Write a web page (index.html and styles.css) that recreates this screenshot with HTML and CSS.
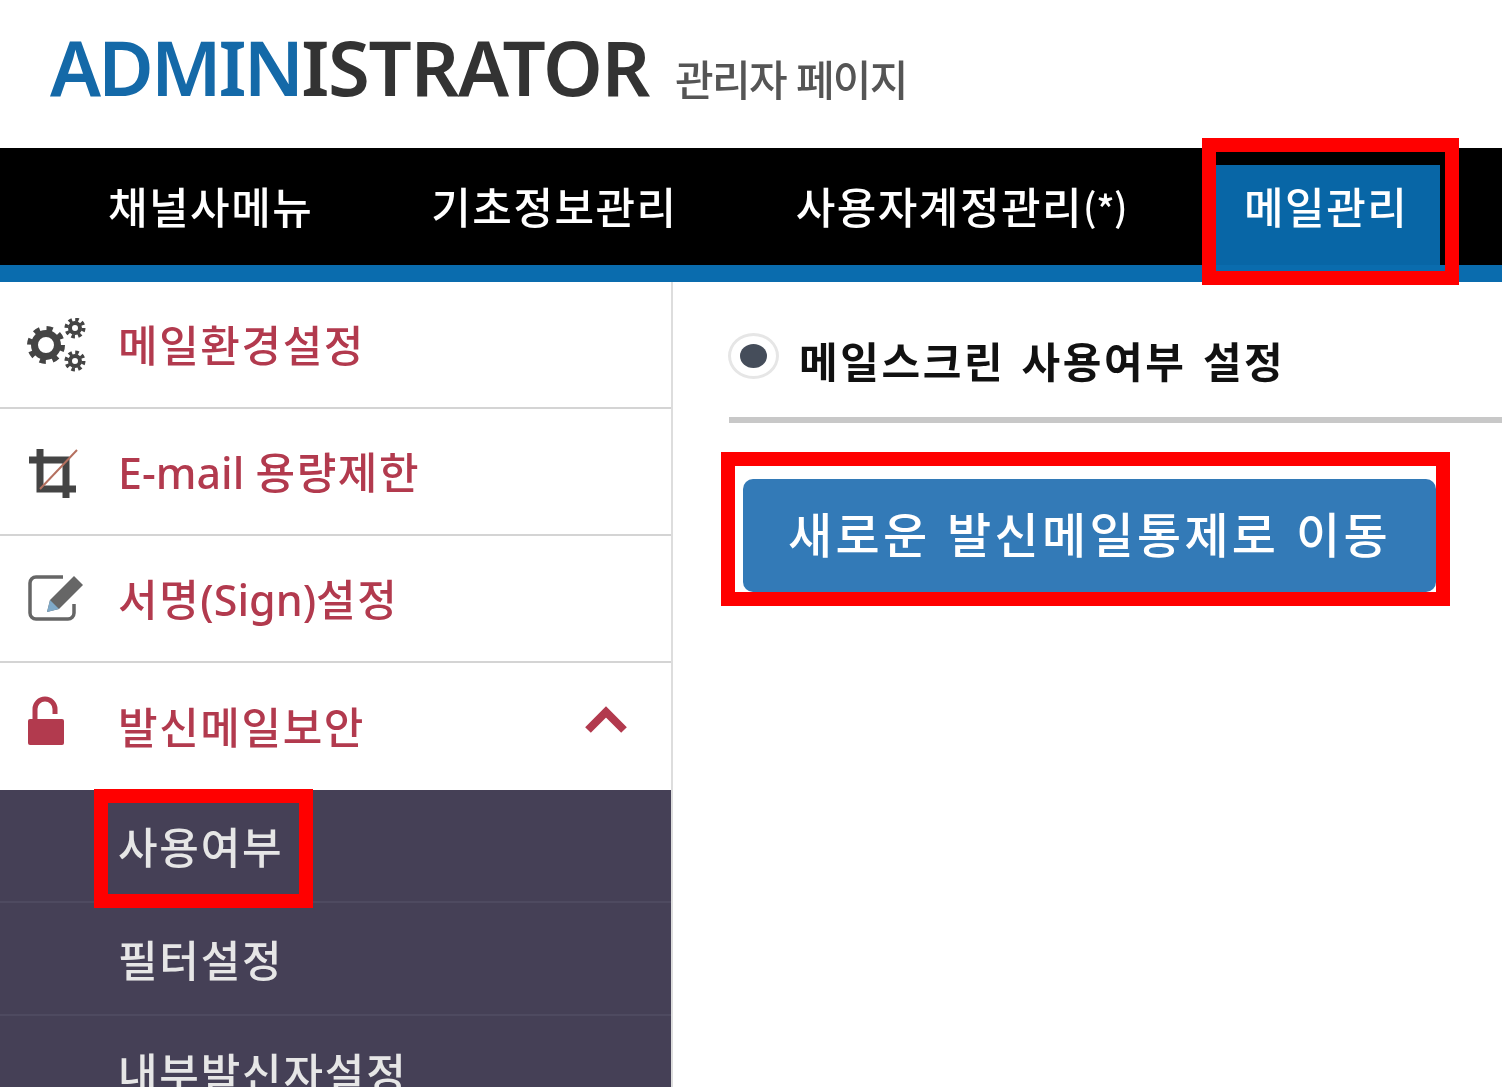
FILE: index.html
```html
<!DOCTYPE html>
<html lang="ko">
<head>
  <meta charset="UTF-8" />
  <title>ADMINISTRATOR</title>
  <link rel="stylesheet" href="styles.css">
</head>
<body>
  <header class="top">
    <span class="logo"><span class="logo-blue">ADMIN</span>ISTRATOR</span>
    <span class="logo-sub">관리자 페이지</span>
  </header>

  <nav class="gnb">
    <a class="gnb-item">채널사메뉴</a>
    <a class="gnb-item">기초정보관리</a>
    <a class="gnb-item">사용자계정관리<span class="gnb-star">(*)</span></a>
    <a class="gnb-item active">메일관리</a>
  </nav>

  <div class="wrap">
    <aside class="side">
      <div class="side-row">
        <span class="side-icon">
          <svg width="60" height="54" viewBox="0 0 60 54">
            <circle cx="19" cy="27" r="11.500" fill="none" stroke="#444" stroke-width="7"/>
            <circle cx="19" cy="27" r="16" fill="none" stroke="#444" stroke-width="6" stroke-dasharray="6 6.57"/>
            <circle cx="48" cy="10" r="5" fill="none" stroke="#444" stroke-width="4"/>
            <circle cx="48" cy="10" r="8.500" fill="none" stroke="#444" stroke-width="4" stroke-dasharray="3.500 3.170"/>
            <circle cx="48" cy="43" r="5" fill="none" stroke="#444" stroke-width="4"/>
            <circle cx="48" cy="43" r="8.500" fill="none" stroke="#444" stroke-width="4" stroke-dasharray="3.500 3.170"/>
          </svg>
        </span>
        <span class="side-text">메일환경설정</span>
      </div>
      <div class="side-row">
        <span class="side-icon icon-low">
          <svg width="60" height="54" viewBox="0 0 60 54">
            <path d="M13 2v40h36M2 13h37v38" fill="none" stroke="#444" stroke-width="7"/>
            <path d="M13 42L50 3" fill="none" stroke="#b5705f" stroke-width="2"/>
          </svg>
        </span>
        <span class="side-text"><span class="latin">E-mail </span>용량제한</span>
      </div>
      <div class="side-row">
        <span class="side-icon">
          <svg width="60" height="54" viewBox="0 0 60 54">
            <path d="M36 5H9a6 6 0 0 0-6 6v30a6 6 0 0 0 6 6h32a6 6 0 0 0 6-6v-9" fill="none" stroke="#666" stroke-width="3.500"/>
            <path d="M47 4l9 9-24 24-12 3 3-12z" fill="#666"/>
            <path d="M23 28l9 9-12 3z" fill="#7fa9c8"/>
          </svg>
        </span>
        <span class="side-text">서명<span class="latin">(Sign)</span>설정</span>
      </div>
      <div class="side-row open">
        <span class="side-icon icon-high">
          <svg width="60" height="54" viewBox="0 0 60 54">
            <path d="M8 28V13a10 10 0 0 1 20 0v5" fill="none" stroke="#b23a4e" stroke-width="5"/>
            <rect x="1" y="23" width="36" height="26" rx="2" fill="#b23a4e"/>
          </svg>
        </span>
        <span class="side-text">발신메일보안</span>
        <svg class="side-arrow" width="46" height="32" viewBox="0 0 46 32">
          <path d="M5 26L23 8l18 18" fill="none" stroke="#b23a4e" stroke-width="8"/>
        </svg>
      </div>
      <ul class="sub">
        <li>사용여부</li>
        <li>필터설정</li>
        <li>내부발신자설정</li>
      </ul>
    </aside>

    <main class="content">
      <div class="title-row">
        <span class="radio"><span class="radio-dot"></span></span>
        <h2 class="title">메일스크린 사용여부 설정</h2>
      </div>
      <button class="move-btn">새로운 발신메일통제로 이동</button>
    </main>
  </div>

  <!-- red annotation boxes -->
  <div class="mark mark-tab"></div>
  <div class="mark mark-btn"></div>
  <div class="mark mark-sub"></div>
</body>
</html>
```

FILE: styles.css
```css
* {
  box-sizing: border-box;
}
html, body {
  height: 1087px;
}
body {
  margin: 0;
  overflow: hidden;
  position: relative;
  background: #fff;
  font-family: "Noto Sans", "Noto Sans CJK KR", sans-serif;
}
.top, .gnb, .wrap {
  filter: blur(0.6px);
}
.top {
  height: 148px;
  padding: 17px 0 0 50px;
  display: flex;
  align-items: baseline;
  gap: 26px;
  white-space: nowrap;
}
.logo {
  font-size: 76px;
  line-height: 100px;
  letter-spacing: -1.3px;
  font-weight: 600;
  color: #333;
}
.logo-blue {
  color: #1469a8;
  letter-spacing: -2.9px;
}
.logo-sub {
  font-family: "Noto Sans CJK KR", sans-serif;
  font-size: 42px;
  letter-spacing: -1.7px;
  font-weight: 500;
  color: #555;
}
.gnb {
  height: 134px;
  background: #000;
  border-bottom: 17px solid #0a6cae;
  padding: 17px 0 0 78px;
  display: flex;
  gap: 58px;
  white-space: nowrap;
}
.gnb-item {
  height: 100px;
  padding: 15px 30px 0;
  font-family: "Noto Sans CJK KR", sans-serif;
  font-size: 43px;
  font-weight: 500;
  letter-spacing: 1.5px;
  line-height: 50px;
  color: #fff;
}
.gnb-star {
  font-size: 38px;
  letter-spacing: -0.5px;
}
.gnb-item.active {
  background: #0866a6;
  width: 224px;
  margin-left: 1px;
  padding-left: 28px;
}
.wrap {
  display: flex;
  height: 805px;
}
.side {
  width: 673px;
  border-right: 2px solid #ddd;
  flex-shrink: 0;
}
.side-row {
  height: 127px;
  border-bottom: 2px solid #d4d4d4;
  padding-left: 27px;
  display: flex;
  align-items: center;
  font-family: "Noto Sans", "Noto Sans CJK KR", sans-serif;
  font-size: 43px;
  font-weight: 500;
  letter-spacing: 1.6px;
  color: #b23a4e;
}
.side-row.open {
  border-bottom: 0;
}
.side-icon {
  width: 91px;
  display: flex;
  flex-shrink: 0;
}
.icon-low {
  padding-top: 5px;
}
.icon-high {
  padding-bottom: 8px;
}
.side-arrow {
  margin-left: auto;
  margin-right: 42px;
  margin-top: -14px;
}
.side-text {
  white-space: nowrap;
  padding-bottom: 2px;
}
.latin {
  letter-spacing: 0;
}
.sub {
  list-style: none;
  margin: 0;
  padding: 0;
  background: #454056;
  height: 297px;
  color: #e6e6e6;
  font-family: "Noto Sans CJK KR", sans-serif;
  font-size: 43px;
  font-weight: 500;
  letter-spacing: 1.8px;
}
.sub li {
  height: 113px;
  padding-left: 118px;
  border-bottom: 2px solid #4e4a60;
  line-height: 111px;
  white-space: nowrap;
}
.content {
  flex: 1;
  padding: 48px 0 0 56px;
}
.title-row {
  height: 93px;
  border-bottom: 6px solid #c8c8c8;
  display: flex;
  align-items: flex-start;
}
.radio {
  width: 51px;
  height: 46px;
  margin: 3px 20px 0 -1px;
  border: 3px solid #e6e6e6;
  border-radius: 50%;
  display: flex;
  align-items: center;
  justify-content: center;
}
.radio-dot {
  width: 27px;
  height: 24px;
  border-radius: 50%;
  background: #454d5a;
}
.title {
  margin: 0;
  font-family: "Noto Sans CJK KR", sans-serif;
  font-size: 42px;
  letter-spacing: 2.6px;
  word-spacing: 2px;
  line-height: 60px;
  font-weight: 700;
  color: #111;
}
.move-btn {
  display: block;
  width: 693px;
  height: 113px;
  margin: 56px 0 0 14px;
  border: 0;
  border-radius: 10px;
  background: #337ab7;
  color: #fff;
  font-family: "Noto Sans CJK KR", sans-serif;
  font-size: 48px;
  font-weight: 500;
  letter-spacing: 3.3px;
  white-space: nowrap;
  padding: 0 0 8px;
}
.mark {
  position: absolute;
  border: 14px solid #f00;
}
.mark-tab {
  left: 1202px;
  top: 138px;
  width: 257px;
  height: 147px;
}
.mark-btn {
  left: 721px;
  top: 452px;
  width: 729px;
  height: 154px;
}
.mark-sub {
  left: 94px;
  top: 789px;
  width: 219px;
  height: 119px;
}
```
